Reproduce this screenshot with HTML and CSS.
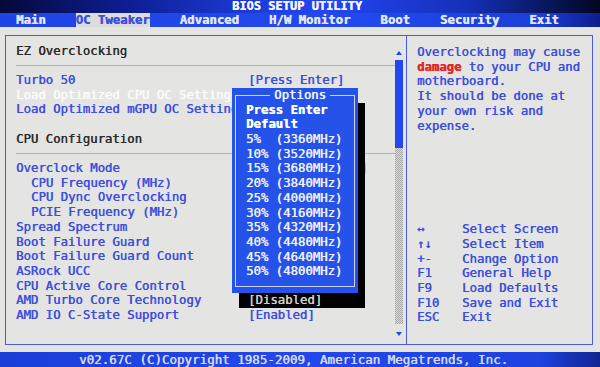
FILE: index.html
```html
<!DOCTYPE html>
<html>
<head>
<meta charset="utf-8" />
<title>BIOS Setup Utility - OC Tweaker</title>
<link rel="stylesheet" href="styles.css">
</head>
<body>

<div class="screen">
  <div class="titlebar">BIOS SETUP UTILITY</div>

  <ul class="menu">
    <li>Main</li>
    <li class="active">OC Tweaker</li>
    <li>Advanced</li>
    <li>H/W Monitor</li>
    <li>Boot</li>
    <li>Security</li>
    <li>Exit</li>
  </ul>

  <div class="body">
    <div class="frame">

      <div class="settings">
        <div class="list">
          <div class="row heading">EZ Overclocking</div>
          <div class="rule"></div>
          <div class="row"><span class="label">Turbo 50</span><span class="value">[Press Enter]</span></div>
          <div class="row selected"><span class="label">Load Optimized CPU OC Setting</span></div>
          <div class="row"><span class="label">Load Optimized mGPU OC Setting</span></div>
          <div class="row"></div>
          <div class="row heading">CPU Configuration</div>
          <div class="rule"></div>
          <!-- value is hidden under the popup, only its last bracket shows -->
          <div class="row"><span class="label">Overclock Mode</span><span class="value tail">]</span></div>
          <div class="row sub"><span class="label">CPU Frequency (MHz)</span></div>
          <div class="row sub"><span class="label">CPU Dync Overclocking</span></div>
          <div class="row sub"><span class="label">PCIE Frequency (MHz)</span></div>
          <div class="row"><span class="label">Spread Spectrum</span></div>
          <div class="row"><span class="label">Boot Failure Guard</span></div>
          <div class="row"><span class="label">Boot Failure Guard Count</span></div>
          <div class="row"><span class="label">ASRock UCC</span></div>
          <div class="row"><span class="label">CPU Active Core Control</span></div>
          <div class="row"><span class="label">AMD Turbo Core Technology</span><span class="value shaded">[Disabled]</span></div>
          <div class="row"><span class="label">AMD IO C-State Support</span><span class="value">[Enabled]</span></div>
        </div>

        <div class="scrollbar">
          <div class="arrow up"></div>
          <div class="thumb"></div>
          <div class="track"></div>
          <div class="arrow down"></div>
        </div>

        <!-- popup list for the selected item -->
        <div class="options">
          <fieldset>
            <legend>Options</legend>
            <div class="opt current">Press Enter</div>
            <div class="opt current">Default</div>
            <div class="opt">5%  (3360MHz)</div>
            <div class="opt">10% (3520MHz)</div>
            <div class="opt">15% (3680MHz)</div>
            <div class="opt">20% (3840MHz)</div>
            <div class="opt">25% (4000MHz)</div>
            <div class="opt">30% (4160MHz)</div>
            <div class="opt">35% (4320MHz)</div>
            <div class="opt">40% (4480MHz)</div>
            <div class="opt">45% (4640MHz)</div>
            <div class="opt">50% (4800MHz)</div>
          </fieldset>
        </div>
      </div>

      <div class="help">
        <p>Overclocking may cause<br /><span class="warn">damage</span> to your CPU and<br />motherboard.<br />It should be done at<br />your own risk and<br />expense.</p>

        <dl class="keys">
          <dt>&harr;</dt><dd>Select Screen</dd>
          <dt>&uarr;&darr;</dt><dd>Select Item</dd>
          <dt>+-</dt><dd>Change Option</dd>
          <dt>F1</dt><dd>General Help</dd>
          <dt>F9</dt><dd>Load Defaults</dd>
          <dt>F10</dt><dd>Save and Exit</dd>
          <dt>ESC</dt><dd>Exit</dd>
        </dl>
      </div>

    </div>
  </div>

  <div class="footer">v02.67C (C)Copyright 1985-2009, American Megatrends, Inc.</div>
</div>

</body>
</html>
```

FILE: styles.css
```css
  body {
    margin: 0;
    background: #000;
  }
  div.screen {
    width: 600px;
    height: 367px;
    display: flex;
    flex-direction: column;
    font-family: "DejaVu Sans Mono", "Liberation Mono", monospace;
    font-size: 12.3px;
    text-shadow: 0.45px 0 0 currentColor; /* bios font is heavier than the regular face */
    background: #e4e4e2;
    overflow: hidden;
  }

  /* top title and tab bar */
  div.titlebar {
    height: 13px;
    line-height: 13px;
    text-align: center;
    font-size: 12px;
    font-weight: bold;
    color: #f4f4ff;
    padding-right: 6px;
    background: linear-gradient(to right, #04083a 0%, #0e1f96 22%, #1f3fe0 45%, #2346f2 55%, #1430b8 78%, #020520 100%);
  }
  ul.menu {
    display: flex;
    gap: 30px;
    height: 14px;
    line-height: 14px;
    margin: 0;
    padding: 0 0 0 16px;
    list-style: none;
    font-weight: bold;
    color: #e2e6fa;
    background: linear-gradient(to right, #1f44e6 0%, #2249ee 60%, #1c3ed8 90%, #0c1e8c 100%);
  }
  ul.menu li.active {
    background: #dcdcda;
    color: #3b4fe2;
  }

  /* main area */
  div.body {
    flex: 1;
    padding: 8px 7px 7px 5px;
  }
  div.frame {
    display: grid;
    grid-template-columns: 401px 1fr;
    height: 310px;
    border: 1px solid #4a5ae4;
    box-sizing: border-box;
  }
  div.settings {
    position: relative;
    display: flex;
    padding: 7.6px 3px 0 10px;
    border-right: 1px solid #4a5ae4;
  }
  div.list {
    flex: 1;
  }
  div.row {
    display: grid;
    grid-template-columns: 232px 1fr;
    height: 14.7px;
    line-height: 14.7px;
    white-space: nowrap;
    color: #3d4fe0;
  }
  div.row.heading {
    color: #2c2c2c;
  }
  div.row.selected {
    color: #fcfcfc;
  }
  div.row.sub span.label {
    padding-left: 15px;
  }
  span.value.tail {
    padding-left: 112px;
  }
  span.value.shaded {
    position: relative;
    z-index: 3;
    color: #cfcfcf;
  }
  div.rule {
    height: 14.7px;
    background: linear-gradient(#a2aaea, #a2aaea) 0 50% / 100% 1px no-repeat;
  }

  /* scroll bar at the right of the list */
  div.scrollbar {
    width: 8px;
    margin-top: 5px;
    display: flex;
    flex-direction: column;
    align-items: center;
  }
  div.arrow {
    width: 0;
    height: 0;
    border-left: 3px solid transparent;
    border-right: 3px solid transparent;
  }
  div.arrow.up {
    border-bottom: 4px solid #2448f0;
    margin: 2px 0 5px;
  }
  div.arrow.down {
    border-top: 4px solid #2448f0;
    margin-top: 8px;
  }
  div.thumb {
    width: 8px;
    height: 88px;
    background: #2448f0;
  }
  div.track {
    width: 8px;
    height: 176px;
    background: repeating-conic-gradient(#a6a6a6 0 25%, #dadada 0 50%) 0 0 / 2px 2px;
  }

  /* options popup */
  div.options {
    position: absolute;
    left: 226px;
    top: 52px;
    z-index: 2;
    width: 126px;
    height: 205px;
    box-sizing: border-box;
    padding: 0 3px 5px;
    background: #2552e8;
    box-shadow: 7px 15px 0 #000;
    color: #eef0ff;
  }
  div.options fieldset {
    margin: 0;
    padding: 0 0 7px 10px;
    border: 1px solid #cdd4fc;
  }
  div.options legend {
    margin: 0 auto;
    padding: 0 4px;
    line-height: 14.7px;
    color: #f2f4ff;
  }
  div.opt {
    height: 14.7px;
    line-height: 14.7px;
    white-space: pre;
  }
  div.opt.current {
    font-weight: bold;
    color: #ffffff;
  }

  /* right help panel */
  div.help {
    padding: 9px 0 0 10px;
    color: #3d4fe0;
    line-height: 14.7px;
    white-space: nowrap;
  }
  div.help p {
    margin: 0;
  }
  span.warn {
    color: #e42626;
    font-weight: bold;
  }
  dl.keys {
    display: grid;
    grid-template-columns: 45px 1fr;
    margin: 89px 0 0;
  }
  dl.keys dt, dl.keys dd {
    margin: 0;
    height: 14.7px;
  }

  div.footer {
    height: 15px;
    line-height: 15px;
    text-align: center;
    font-size: 12.5px;
    padding-right: 13px;
    color: #d6daf2;
    background: linear-gradient(to right, #1a3ed8 0%, #2248ec 50%, #1d42e0 90%, #0f2590 100%);
  }
```
